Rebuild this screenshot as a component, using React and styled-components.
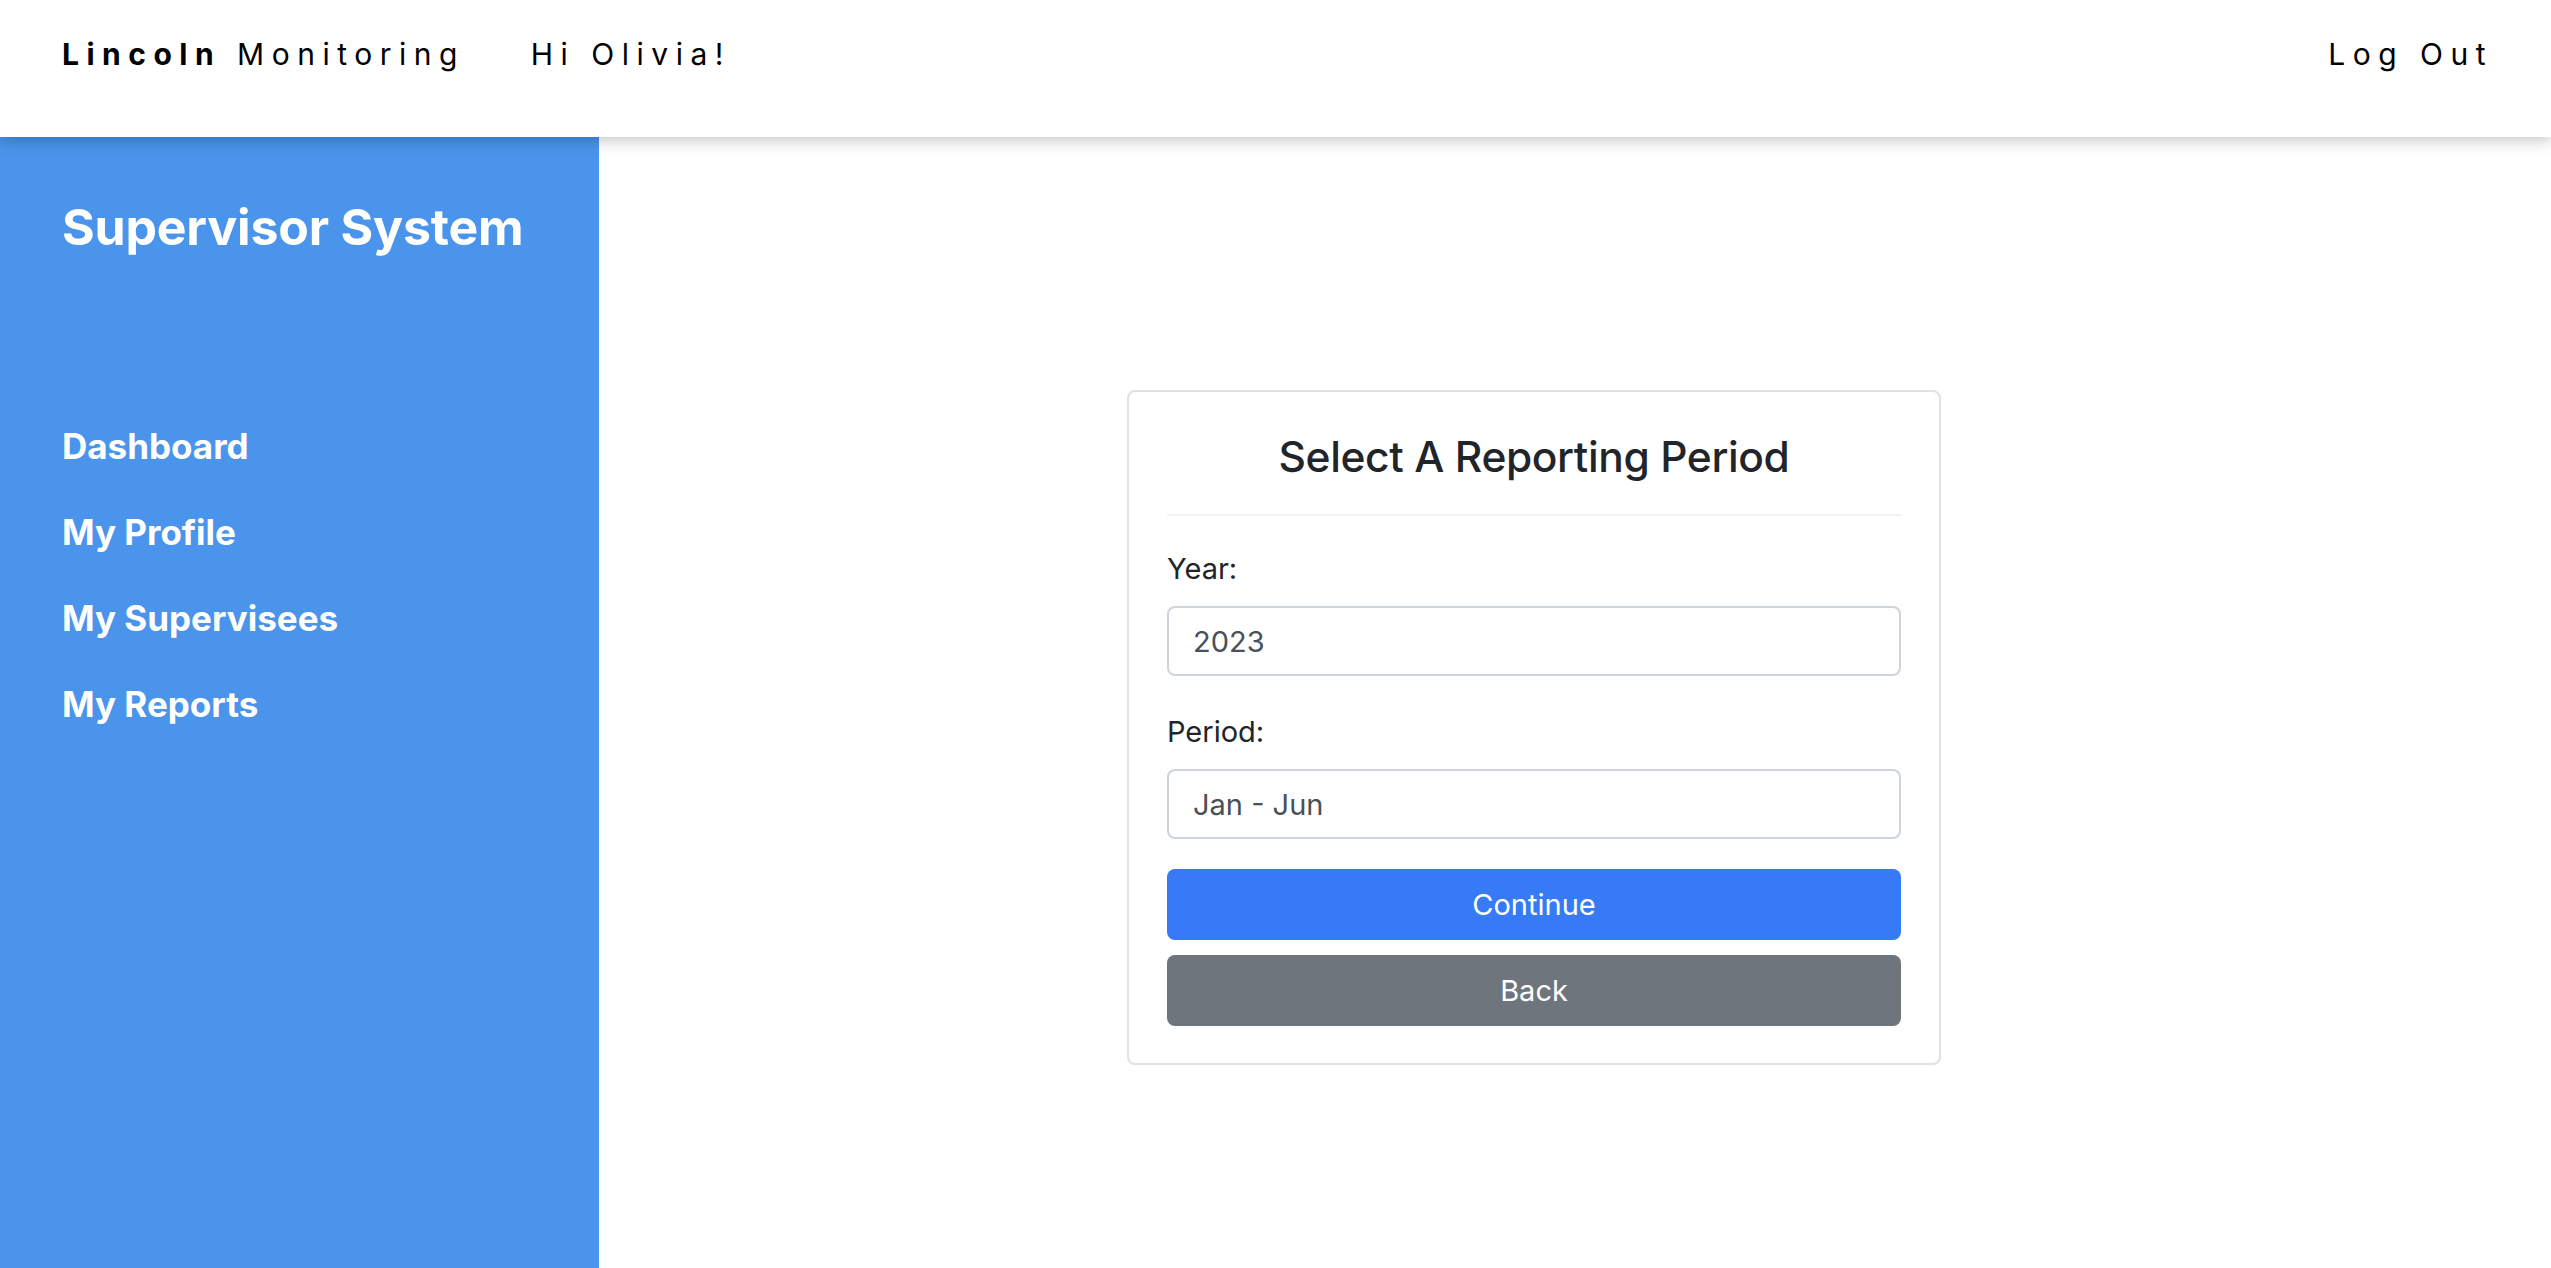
import React from 'react';
import styled, { createGlobalStyle } from 'styled-components';

const GlobalStyle = createGlobalStyle`
  html, body {
    margin: 0;
    padding: 0;
    height: 100%;
  }
  body {
    font-family: Inter, "Noto Sans", "Liberation Sans", sans-serif;
    color: #212529;
    background: #ffffff;
  }
  * {
    box-sizing: border-box;
  }
`;

const Page = styled.div`
  display: flex;
  flex-direction: column;
  height: 100vh;
`;

const TopBar = styled.header`
  position: relative;
  z-index: 2;
  display: flex;
  justify-content: space-between;
  align-items: flex-start;
  height: 137px;
  padding: 36px 58px 0 62px;
  background: #ffffff;
  box-shadow: 0 4px 14px rgba(0, 0, 0, 0.22);
`;

const Brand = styled.div`
  display: flex;
  align-items: center;
  gap: 66px;
`;

const SpacedText = styled.span`
  font-family: Inter, "Liberation Sans", sans-serif;
  font-size: 30px;
  line-height: 36px;
  letter-spacing: 7.5px;
  color: #000000;
  font-weight: ${(p) => (p.$bold ? 700 : 400)};
`;

const Body = styled.div`
  flex: 1;
  display: flex;
  min-height: 0;
`;

const Sidebar = styled.aside`
  width: 599px;
  flex-shrink: 0;
  background: #4a94eb;
  padding: 58px 62px;
  color: #ffffff;
`;

const SideTitle = styled.h2`
  margin: 0;
  font-size: 50px;
  line-height: 65px;
  font-weight: 700;
  letter-spacing: -0.2px;
`;

const NavList = styled.nav`
  display: flex;
  flex-direction: column;
  gap: 43px;
  margin-top: 165px;
`;

const NavLink = styled.a`
  font-size: 35px;
  line-height: 43px;
  font-weight: 700;
  color: #ffffff;
  text-decoration: none;
  cursor: pointer;
`;

const Main = styled.main`
  flex: 1;
  display: flex;
  justify-content: center;
  align-items: flex-start;
  padding: 253px 82px 0 0;
`;

const Card = styled.div`
  width: 814px;
  border: 2px solid #dfe1e4;
  border-radius: 8px;
  padding: 38px 38px 37px;
  display: flex;
  flex-direction: column;
`;

const CardTitle = styled.h3`
  margin: 0;
  text-align: center;
  font-size: 42.5px;
  line-height: 54px;
  font-weight: 500;
  color: #212529;
  letter-spacing: -0.4px;
`;

const Divider = styled.hr`
  margin: 30px 0 30px;
  border: none;
  border-top: 2px solid #f1f2f3;
`;

const Label = styled.label`
  display: block;
  font-size: 29px;
  line-height: 45px;
  color: #212529;
  margin-bottom: 15px;
`;

const Select = styled.div`
  height: 70px;
  border: 2px solid #ced4da;
  border-radius: 8px;
  padding: 0 24px;
  display: flex;
  align-items: center;
  font-size: 29px;
  color: #495057;
  margin-bottom: ${(p) => p.$gap}px;
`;

const Button = styled.button`
  height: 71px;
  width: 100%;
  border: none;
  border-radius: 8px;
  font-family: inherit;
  font-size: 29px;
  color: #ffffff;
  background: ${(p) => (p.$variant === 'secondary' ? '#6e757d' : '#377af5')};
  margin-bottom: ${(p) => p.$gap || 0}px;
  cursor: pointer;
`;

export default function App() {
  const links = ['Dashboard', 'My Profile', 'My Supervisees', 'My Reports'];

  return (
    <Page>
      <GlobalStyle />
      <TopBar>
        <Brand>
          <div>
            <SpacedText $bold>Lincoln</SpacedText>
            <SpacedText> Monitoring</SpacedText>
          </div>
          <SpacedText>Hi Olivia!</SpacedText>
        </Brand>
        <SpacedText>Log Out</SpacedText>
      </TopBar>
      <Body>
        <Sidebar>
          <SideTitle>Supervisor System</SideTitle>
          <NavList>
            {links.map((l) => (
              <NavLink key={l}>{l}</NavLink>
            ))}
          </NavList>
        </Sidebar>
        <Main>
          <Card>
            <CardTitle>Select A Reporting Period</CardTitle>
            <Divider />
            <Label>Year:</Label>
            <Select $gap={33}>2023</Select>
            <Label>Period:</Label>
            <Select $gap={30}>Jan - Jun</Select>
            <Button $gap={15}>Continue</Button>
            <Button $variant="secondary">Back</Button>
          </Card>
        </Main>
      </Body>
    </Page>
  );
}
